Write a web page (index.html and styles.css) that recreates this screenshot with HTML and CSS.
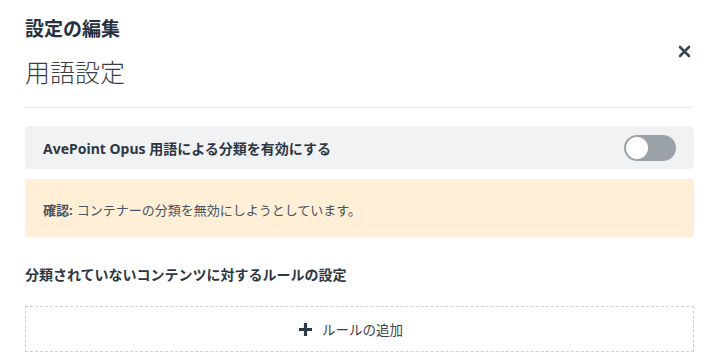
FILE: index.html
```html
<!DOCTYPE html>
<html lang="ja">
<head>
<meta charset="utf-8">
<link rel="stylesheet" href="styles.css">
</head>
<body>
<div class="panel">
  <div class="header">
    <div class="titles">
      <div class="title">設定の編集</div>
      <div class="subtitle">用語設定</div>
    </div>
    <button class="close" aria-label="close">
      <svg width="13" height="13" viewBox="0 0 13 13"><path d="M2 2 L11 11 M11 2 L2 11" stroke="#3b4858" stroke-width="2.6" stroke-linecap="round"/></svg>
    </button>
  </div>
  <div class="divider"></div>
  <div class="toggle-row">
    <span class="toggle-label">AvePoint Opus 用語による分類を有効にする</span>
    <span class="switch"><span class="knob"></span></span>
  </div>
  <div class="warning"><b>確認:</b> コンテナーの分類を無効にしようとしています。</div>
  <div class="section-title">分類されていないコンテンツに対するルールの設定</div>
  <div class="add-rule">
    <svg width="15" height="15" viewBox="0 0 15 15"><path d="M7.5 1 V14 M1 7.5 H14" stroke="#2f3a47" stroke-width="3.2"/></svg>
    <span>ルールの追加</span>
  </div>
</div>
</body>
</html>
```

FILE: styles.css
```css
html, body {
  margin: 0;
  padding: 0;
  background: #ffffff;
}
body {
  font-family: "Noto Sans", "Noto Sans CJK JP", sans-serif;
  color: #333d49;
}
.panel {
  padding: 15px 31px 0 25px;
}
.header {
  display: flex;
  justify-content: space-between;
  align-items: flex-start;
}
.title {
  font-size: 19px;
  font-weight: 700;
  line-height: 28px;
  color: #263241;
}
.subtitle {
  font-size: 25px;
  font-weight: 300;
  line-height: 34px;
  margin-top: 12px;
  color: #3a3f46;
}
.close {
  border: 0;
  background: none;
  padding: 0;
  margin: 30px 3px 0 0;
  width: 13px;
  height: 13px;
  display: flex;
}
.divider {
  height: 1px;
  background: #e4e6e9;
  margin-top: 18px;
  margin-right: 2px;
}
.toggle-row {
  margin-top: 18px;
  height: 43px;
  background: #f1f2f4;
  border-radius: 4px;
  display: flex;
  align-items: center;
  justify-content: space-between;
  padding: 0 18px 0 18px;
}
.toggle-label {
  font-size: 14px;
  font-weight: 700;
  color: #2e3844;
}
.switch {
  width: 52px;
  height: 26px;
  border-radius: 13px;
  background: #9aa1a8;
  display: flex;
  align-items: center;
  padding: 0 2px;
  box-sizing: border-box;
}
.knob {
  width: 22px;
  height: 22px;
  border-radius: 50%;
  background: #fff;
}
.warning {
  margin-top: 10px;
  height: 58px;
  background: #ffefd6;
  border-radius: 3px;
  display: flex;
  align-items: center;
  padding: 3px 18px 0;
  box-sizing: border-box;
  font-size: 13px;
  color: #4a5360;
}
.warning b {
  font-weight: 700;
  margin-right: 4px;
}
.section-title {
  margin-top: 27px;
  font-size: 14px;
  font-weight: 700;
  line-height: 22px;
  color: #2e3844;
}
.add-rule {
  margin-top: 20px;
  height: 46px;
  border: 1px dashed #cfd2d6;
  box-sizing: border-box;
  display: flex;
  align-items: center;
  justify-content: center;
  gap: 9px;
  padding-right: 18px;
  font-size: 13.5px;
  color: #3a424c;
}
```
